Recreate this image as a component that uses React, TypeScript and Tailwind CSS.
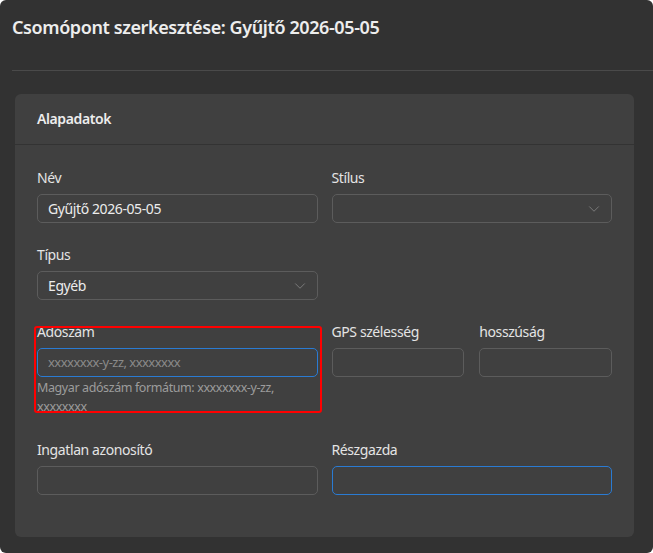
import { ChevronDown } from 'lucide-react';

const font = { fontFamily: '"Noto Sans", "Open Sans", Arial, sans-serif' };

function Label({ children }: { children: React.ReactNode }) {
    return <div className="h-5 mb-1.5 text-sm leading-5 text-[#e4e4e4]">{children}</div>;
}

function Input({ value, placeholder, focused }: { value?: string; placeholder?: string; focused?: boolean }) {
    return (
        <div
            className={`h-[29px] rounded-[5px] border bg-[#404040] px-[10px] flex items-center text-sm ${
                focused ? 'border-[#2a7bd3]' : 'border-[#5c5c5c]'
            }`}
        >
            {value ? (
                <span className="text-[#ececec]">{value}</span>
            ) : placeholder ? (
                <span className="text-[13px] tracking-[-0.04em] text-[#8a8a8a]">{placeholder}</span>
            ) : null}
        </div>
    );
}

function Select({ value }: { value?: string }) {
    return (
        <div className="h-[29px] rounded-[5px] border border-[#5c5c5c] bg-[#404040] pl-[10px] pr-[8px] flex items-center justify-between text-sm">
            <span className="text-[#ececec]">{value}</span>
            <ChevronDown size={18} strokeWidth={1} className="text-[#8c8c8c]" />
        </div>
    );
}

export default function App() {
    return (
        <div className="min-h-screen bg-white tracking-[-0.025em]" style={font}>
            <div className="h-[553px] w-[653px] overflow-hidden rounded-md bg-[#323232] flex flex-col">
                <div className="ml-3 h-[71px] border-b border-[#4a4a4a] pt-[15px]">
                    <h1 className="text-lg leading-6 font-semibold text-[#ededed]">
                        Csomópont szerkesztése: Gyűjtő 2026-05-05
                    </h1>
                </div>

                <div className="pl-[15px] pr-[19px] pt-[23px]">
                    <div className="rounded-md bg-[#404040]">
                        <div className="h-[51px] px-[22px] flex items-center border-b border-[#333333] text-sm font-semibold text-[#ededed]">
                            Alapadatok
                        </div>

                        <div className="grid grid-cols-2 gap-x-[14px] gap-y-[22px] px-[22px] pt-[23px] pb-[42px]">
                            <div>
                                <Label>Név</Label>
                                <Input value="Gyűjtő 2026-05-05" />
                            </div>
                            <div>
                                <Label>Stílus</Label>
                                <Select />
                            </div>

                            <div>
                                <Label>Típus</Label>
                                <Select value="Egyéb" />
                            </div>
                            <div />

                            <div className="relative">
                                <Label>Adószám</Label>
                                <Input placeholder="xxxxxxxx-y-zz, xxxxxxxx" focused />
                                <div className="mt-px pb-[2px] text-[12.5px] leading-[19px] text-[#9c9c9c]">
                                    Magyar adószám formátum: xxxxxxxx-y-zz, xxxxxxxx
                                </div>
                                <div className="absolute top-[4px] -left-[3px] -right-[4px] bottom-[5px] rounded-[3px] border-2 border-[#ff0000]" />
                            </div>
                            <div className="grid grid-cols-2 gap-x-[15px] self-start">
                                <div>
                                    <Label>GPS szélesség</Label>
                                    <Input />
                                </div>
                                <div>
                                    <Label>hosszúság</Label>
                                    <Input />
                                </div>
                            </div>

                            <div>
                                <Label>Ingatlan azonosító</Label>
                                <Input />
                            </div>
                            <div>
                                <Label>Részgazda</Label>
                                <Input focused />
                            </div>
                        </div>
                    </div>
                </div>
            </div>
        </div>
    );
}
